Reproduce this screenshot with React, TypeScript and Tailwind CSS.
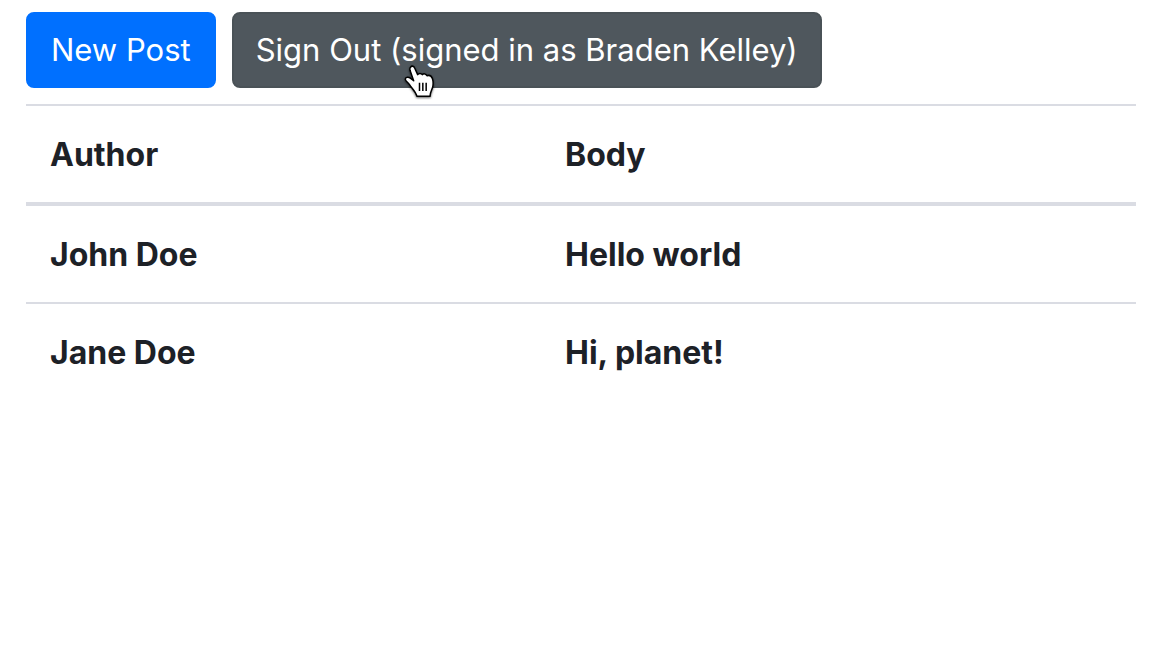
const posts = [
  { author: "John Doe", body: "Hello world" },
  { author: "Jane Doe", body: "Hi, planet!" },
];

function HandCursor() {
  return (
    <svg
      aria-hidden="true"
      viewBox="24 24 96 108"
      className="pointer-events-none absolute top-[49px] left-[169px] h-9 w-8 drop-shadow-[0_1px_1px_rgba(0,0,0,0.6)]"
    >
      <path
        d="M47 36c4-5 10-2 12 3l9 20c3-5 11-5 14 0 4-4 11-3 14 3 6-2 13 1 16 8 3 9 3 18 1 27-3 9-7 13-8 27H66c-4-15-16-24-23-36-4-7-13-10-12-16 1-7 10-7 16-2l9 7-11-31c-1-4-1-7 2-10z"
        fill="#fff"
        stroke="#000"
        strokeWidth="4.500"
        strokeLinejoin="round"
      />
      <path d="M73.500 83v25M83.500 83v25M93.500 83v25" stroke="#000" strokeWidth="4.500" />
    </svg>
  );
}

export default function App() {
  return (
    <main className="min-h-screen bg-white pt-3 pr-6 pl-[26px] font-['Inter',sans-serif] text-[32px] leading-12 text-[#1d2127]">
      <div className="mb-4 flex gap-4 text-[31px]">
        <button
          type="button"
          className="h-[76px] rounded-lg border-2 border-[#0070ff] bg-[#0070ff] px-[23px] whitespace-nowrap text-white"
        >
          New Post
        </button>
        <button
          type="button"
          className="relative h-[76px] cursor-pointer rounded-lg border-2 border-[#4a5257] bg-[#4f575d] px-[22px] whitespace-nowrap text-white"
        >
          Sign Out (signed in as Braden Kelley)
          <HandCursor />
        </button>
      </div>
      <table className="w-full border-collapse text-left font-bold">
        <thead>
          <tr className="border-t-2 border-b-4 border-[#dadce3]">
            <th scope="col" className="w-[46.4%] px-6 pt-[25px] pb-[23px]">Author</th>
            <th scope="col" className="px-6 pt-[25px] pb-[23px]">Body</th>
          </tr>
        </thead>
        <tbody>
          {posts.map((post) => (
            <tr key={post.author} className="border-b-2 border-[#dadce3] last:border-b-0">
              <td className="px-6 pt-[25px] pb-[23px]">{post.author}</td>
              <td className="px-6 pt-[25px] pb-[23px]">{post.body}</td>
            </tr>
          ))}
        </tbody>
      </table>
    </main>
  );
}
